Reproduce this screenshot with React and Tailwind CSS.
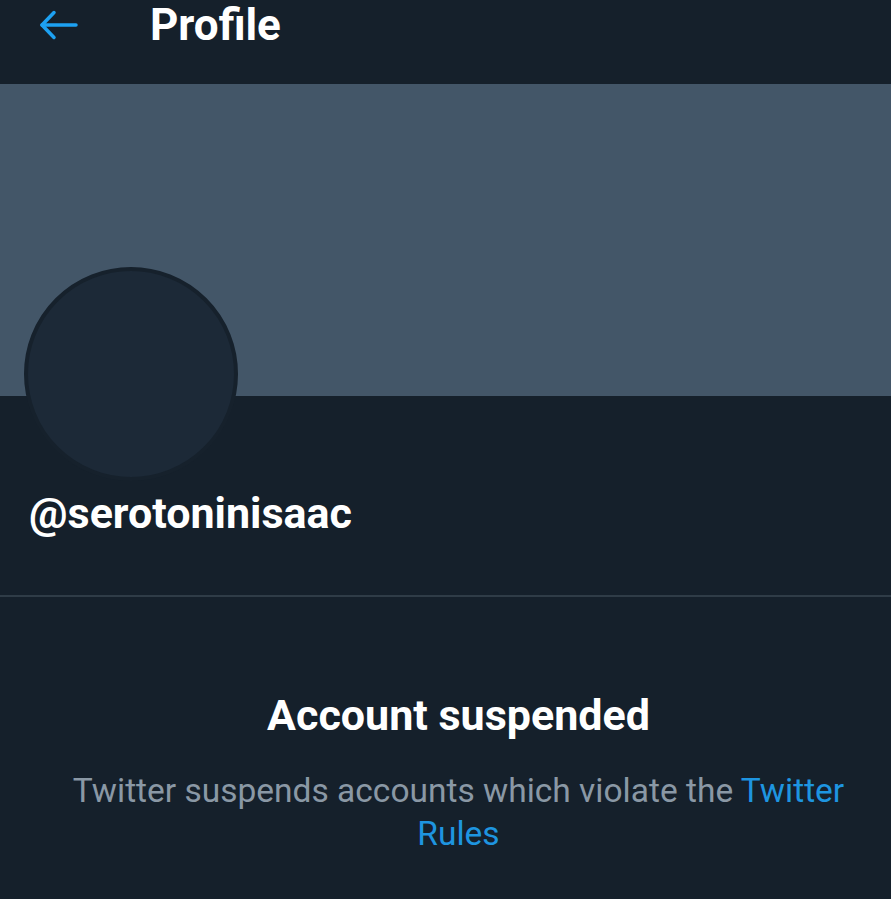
import React from "react";

const Back = () => (
  <svg width="40" height="32" viewBox="0 0 40 32" fill="none" stroke="#1da1f2" strokeWidth="3.5" strokeLinecap="round" strokeLinejoin="round">
    <path d="M37 16H3" />
    <path d="M15 3.5L3 16l12 12.5" />
  </svg>
);

const App = () => {
  return (
    <div className="min-h-[899px] w-[891px] bg-[#15202b] font-['Roboto',sans-serif] overflow-hidden">
      {/* HEADER */}
      <div className="h-[84px] flex items-start">
        <div className="ml-[39px] mt-[9px]">
          <Back />
        </div>
        <h1 className="ml-[71px] mt-[1px] text-[44px] leading-[48px] font-bold text-white">
          Profile
        </h1>
      </div>

      {/* BANNER */}
      <div className="h-[312px] bg-[#435668]" />

      {/* AVATAR */}
      <div className="ml-[24px] -mt-[129px] w-[214px] h-[214px] rounded-full border-[4px] border-[#16212c] bg-[#1c2937]" />

      {/* HANDLE */}
      <div className="mt-[8px] pl-[29px] text-[43px] leading-[48px] font-bold text-white">
        @serotoninisaac
      </div>

      <div className="mt-[58px] h-[2px] bg-[#2f3c47]" />

      {/* SUSPENDED */}
      <div className="pl-[38px] pr-[12px] pt-[94px] text-center">
        <h2 className="text-[43px] leading-[48px] font-bold text-white">
          Account suspended
        </h2>
        <p className="mt-[30px] text-[33.5px] leading-[43px] text-[#8a98a5]">
          Twitter suspends accounts which violate the{" "}
          <span className="text-[#1e95e0]">Twitter Rules</span>
        </p>
      </div>
    </div>
  );
};

export default App;
